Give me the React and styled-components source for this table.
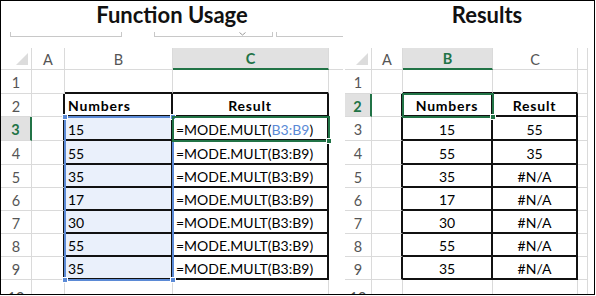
import React from "react";
import styled, { createGlobalStyle } from "styled-components";

const GREEN = "#217346";
const BLUE = "#5b8ad6";
const GRID = "#dadada";
const LINE = "#111";

const ROWS = [22, 24, 23, 24, 24, 23, 23, 23, 23, 23, 34];
const LETTERS = ["", "A", "B", "C", ""];
const NUMS = ["15", "55", "35", "17", "30", "55", "35"];
const RES = ["55", "35", "#N/A", "#N/A", "#N/A", "#N/A", "#N/A"];

const GlobalStyle = createGlobalStyle`
  html, body { margin: 0; padding: 0; background: #fff; }
  body { font-family: Lato, "Open Sans", sans-serif; }
`;

const Frame = styled.div`
  box-sizing: border-box;
  width: 595px;
  height: 295px;
  border: 1px solid #000;
  display: flex;
  align-items: flex-start;
  overflow: hidden;
  background: #fff;
`;

const Panel = styled.section`
  width: ${(p) => p.$w}px;
  flex: none;
  display: flex;
  flex-direction: column;
  & > * {
    flex: none;
  }
`;

const Title = styled.h2`
  margin: 0;
  height: 31px;
  line-height: 32px;
  padding-left: ${(p) => p.$shift || 0}px;
  text-align: center;
  font: 700 22px Lato, sans-serif;
  color: #111;
`;

const Ribbon = styled.div`
  height: 16px;
  display: flex;
  align-items: flex-start;
`;

const RibbonBox = styled.div`
  position: relative;
  box-sizing: border-box;
  margin-left: ${(p) => p.$ml}px;
  width: ${(p) => p.$w}px;
  height: 5px;
  border: 1px solid #c8c8c8;
  border-top: none;
  border-right: ${(p) => (p.$open ? "none" : "1px solid #c8c8c8")};
`;

const Chevron = styled.svg`
  position: absolute;
  right: 26px;
  top: 0;
`;

const Spacer = styled.div`
  height: 16px;
`;

const Sheet = styled.div`
  position: relative;
  margin-left: ${(p) => p.$ml || 0}px;
  display: grid;
  grid-template-columns: ${(p) => p.$cols.map((c) => c + "px").join(" ")};
  grid-template-rows: ${ROWS.map((r) => r + "px").join(" ")};
  font-size: 14.5px;
`;

const Corner = styled.div`
  box-sizing: border-box;
  border-right: 1px solid ${GRID};
  border-bottom: 1px solid ${GRID};
  display: flex;
  align-items: flex-end;
  justify-content: flex-end;
  padding: 0 3px 4px 0;
  &::after {
    content: "";
    border-style: solid;
    border-width: 0 0 12px 12px;
    border-color: transparent transparent #dcdcdc transparent;
  }
`;

const ColHead = styled.div`
  box-sizing: border-box;
  display: flex;
  align-items: center;
  justify-content: center;
  padding-top: 1px;
  color: ${(p) => (p.$on ? GREEN : "#555")};
  font-weight: ${(p) => (p.$on ? 700 : 400)};
  background: ${(p) => (p.$on ? "#e1e1e1" : "#fff")};
  border-right: ${(p) => (p.$bare ? "none" : `1px solid ${GRID}`)};
  border-bottom: ${(p) => (p.$on ? `2px solid ${GREEN}` : `1px solid ${GRID}`)};
`;

const RowHead = styled.div`
  box-sizing: border-box;
  display: flex;
  align-items: center;
  justify-content: center;
  padding-top: 2px;
  color: ${(p) => (p.$on ? GREEN : "#555")};
  font-weight: ${(p) => (p.$on ? 700 : 400)};
  background: ${(p) => (p.$on ? "#e1e1e1" : "#fff")};
  border-right: ${(p) => (p.$on ? `2px solid ${GREEN}` : `1px solid ${GRID}`)};
  border-bottom: 1px solid ${GRID};
`;

const Cell = styled.div`
  box-sizing: border-box;
  display: flex;
  align-items: center;
  justify-content: ${(p) => (p.$align === "center" ? "center" : "flex-start")};
  padding: 2px 3px 0;
  overflow: hidden;
  white-space: nowrap;
  font-size: 14px;
  color: #000;
  font-weight: ${(p) => (p.$bold ? 700 : 400)};
  letter-spacing: ${(p) => (p.$bold ? "0.8px" : "0")};
  background: ${(p) => (p.$tint ? "#eaf0fb" : "#fff")};
  border-right: ${(p) =>
    p.$rb ? `2px solid ${LINE}` : p.$bare ? "none" : `1px solid ${GRID}`};
  border-bottom: ${(p) =>
    p.$bb ? `2px solid ${LINE}` : p.$bare ? "none" : `1px solid ${GRID}`};
`;

const Ref = styled.span`
  color: ${BLUE};
`;

const RangeBox = styled.div`
  position: absolute;
  box-sizing: border-box;
  left: ${(p) => p.$box.left}px;
  top: ${(p) => p.$box.top}px;
  width: ${(p) => p.$box.width}px;
  height: ${(p) => p.$box.height}px;
  border: 2px solid ${(p) => p.$color};
  pointer-events: none;
`;

const Handle = styled.span`
  position: absolute;
  width: 6px;
  height: 6px;
  box-sizing: border-box;
  border: 1px solid #fff;
  background: ${(p) => p.$color};
  ${(p) => (p.$x === "r" ? "right: -4px;" : "left: -4px;")}
  ${(p) => (p.$y === "b" ? "bottom: -4px;" : "top: -4px;")}
`;

const offset = (sizes, i) => sizes.slice(0, i).reduce((a, b) => a + b, 0);

const boxOf = (cols, c, r0, r1) => ({
  left: offset(cols, c) - 1,
  top: offset(ROWS, r0) - 1,
  width: cols[c] + 2,
  height: offset(ROWS, r1 + 1) - offset(ROWS, r0) + 2,
});

function Spreadsheet({ cols, ml, activeCol, activeRow, table, bareLast, cell, children }) {
  const last = cols.length - 1;
  const inTable = (c, r) =>
    c >= table.c0 && c <= table.c1 && r >= table.r0 && r <= table.r1;
  const out = [];
  ROWS.forEach((_, r) => {
    cols.forEach((__, c) => {
      const key = `${r}-${c}`;
      const bare = bareLast && c === last;
      if (r === 0 && c === 0) out.push(<Corner key={key} />);
      else if (r === 0)
        out.push(
          <ColHead key={key} $on={c === activeCol} $bare={bare}>
            {LETTERS[c]}
          </ColHead>
        );
      else if (c === 0)
        out.push(
          <RowHead key={key} $on={r === activeRow}>
            {r}
          </RowHead>
        );
      else {
        const info = cell(c, r) || {};
        out.push(
          <Cell
            key={key}
            $bare={bare}
            $rb={inTable(c, r) || inTable(c + 1, r)}
            $bb={inTable(c, r) || inTable(c, r + 1)}
            $align={info.align}
            $bold={info.bold}
            $tint={info.tint}
          >
            {info.text}
          </Cell>
        );
      }
    });
  });
  return (
    <Sheet $cols={cols} $ml={ml}>
      {out}
      {children}
    </Sheet>
  );
}

const LEFT_COLS = [31, 33, 108, 156, 14];
const RIGHT_COLS = [27, 31, 90, 85, 10];
const TABLE = { c0: 2, c1: 3, r0: 2, r1: 9 };

const leftCell = (c, r) => {
  if (r === 2 && c === 2) return { text: "Numbers", bold: true };
  if (r === 2 && c === 3) return { text: "Result", bold: true, align: "center" };
  if (r >= 3 && r <= 9 && c === 2) return { text: NUMS[r - 3], tint: true };
  if (r === 3 && c === 3)
    return {
      text: (
        <>
          =MODE.MULT(<Ref>B3:B9</Ref>)
        </>
      ),
    };
  if (r >= 4 && r <= 9 && c === 3) return { text: "=MODE.MULT(B3:B9)" };
  return null;
};

const rightCell = (c, r) => {
  if (r === 2 && c === 2) return { text: "Numbers", bold: true, align: "center" };
  if (r === 2 && c === 3) return { text: "Result", bold: true, align: "center" };
  if (r >= 3 && r <= 9 && c === 2) return { text: NUMS[r - 3], align: "center" };
  if (r >= 3 && r <= 9 && c === 3) return { text: RES[r - 3], align: "center" };
  return null;
};

export default function App() {
  return (
    <>
      <GlobalStyle />
      <Frame>
        <Panel $w={342}>
          <Title>Function Usage</Title>
          <Ribbon>
            <RibbonBox $ml={9} $w={112} />
            <RibbonBox $ml={32} $w={120}>
              <Chevron width="7" height="4" viewBox="0 0 7 4">
                <path d="M0.5 0.5 L3.5 3 L6.5 0.5" fill="none" stroke="#999" strokeWidth="1" />
              </Chevron>
            </RibbonBox>
            <RibbonBox $ml={3} $w={67} $open />
          </Ribbon>
          <Spreadsheet
            cols={LEFT_COLS}
            activeCol={3}
            activeRow={3}
            table={TABLE}
            bareLast
            cell={leftCell}
          >
            <RangeBox $color={BLUE} $box={boxOf(LEFT_COLS, 2, 3, 9)}>
              <Handle $color={BLUE} $x="l" $y="t" />
              <Handle $color={BLUE} $x="r" $y="t" />
              <Handle $color={BLUE} $x="l" $y="b" />
              <Handle $color={BLUE} $x="r" $y="b" />
            </RangeBox>
            <RangeBox $color={GREEN} $box={boxOf(LEFT_COLS, 3, 3, 3)}>
              <Handle $color={GREEN} $x="r" $y="b" />
            </RangeBox>
          </Spreadsheet>
        </Panel>
        <Panel $w={251}>
          <Title $shift={37}>Results</Title>
          <Spacer />
          <Spreadsheet
            cols={RIGHT_COLS}
            ml={2}
            activeCol={2}
            activeRow={2}
            table={TABLE}
            cell={rightCell}
          >
            <RangeBox $color={GREEN} $box={boxOf(RIGHT_COLS, 2, 2, 2)}>
              <Handle $color={GREEN} $x="r" $y="b" />
            </RangeBox>
          </Spreadsheet>
        </Panel>
      </Frame>
    </>
  );
}
